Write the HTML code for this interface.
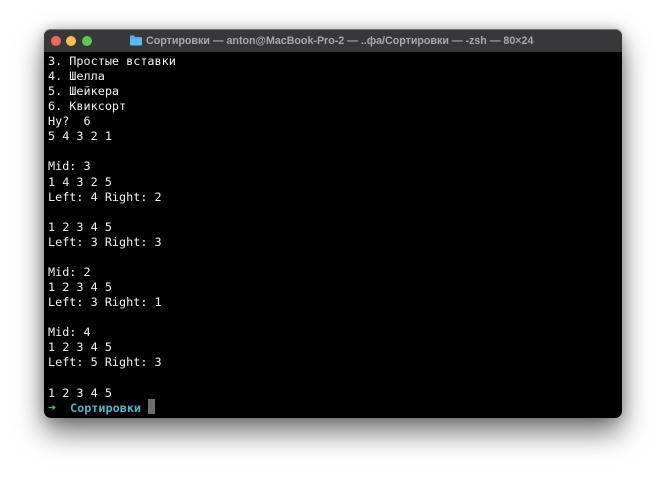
<!DOCTYPE html>
<html>
<head>
<meta charset="utf-8">
<style>
html,body{margin:0;padding:0;background:#fff;width:666px;height:477px;overflow:hidden}
#win{position:absolute;left:44px;top:29px;width:578px;height:389px;border-radius:7px;background:#000;box-shadow:0 14px 28px rgba(0,0,0,.55),0 0 12px rgba(0,0,0,.22)}
#bar{position:absolute;left:0;top:0;width:578px;height:23px;background:#38383b;border-radius:7px 7px 0 0;border-top:1px solid #77777a;box-sizing:border-box}
.dot{position:absolute;top:6px;width:10px;height:10px;border-radius:50%}
#title{position:absolute;left:102px;top:5px;font:bold 10.68px/13px "Liberation Sans",sans-serif;color:#a9a9ab;white-space:nowrap;filter:blur(.3px)}
#folder{position:absolute;left:86px;top:5px}
.l{position:absolute;left:4px;font:11.8px/15px "DejaVu Sans Mono",monospace;color:#f2f2f2;white-space:pre;filter:blur(.3px)}
</style>
</head>
<body>
<div id="win">
<div id="bar">
<div class="dot" style="left:7px;background:#ec6a5e"></div>
<div class="dot" style="left:22px;background:#f4bf4f"></div>
<div class="dot" style="left:38px;background:#61c554"></div>
<svg id="folder" width="12" height="11" viewBox="0 0 12 11"><path d="M0 1.500Q0 .5 1 .5H4L5 2H11Q12 2 12 3V9.500Q12 10.500 11 10.500H1Q0 10.500 0 9.500Z" fill="#5cb8ef"/><rect x="0" y="2.500" width="12" height=".7" fill="#3f9fdc"/></svg>
<div id="title">Сортировки — anton@MacBook-Pro-2 — ..фа/Сортировки — -zsh — 80×24</div>
</div>
<div class="l" style="top:25px">3. Простые вставки</div>
<div class="l" style="top:40px">4. Шелла</div>
<div class="l" style="top:55px">5. Шейкера</div>
<div class="l" style="top:70px">6. Квиксорт</div>
<div class="l" style="top:85px">Ну?  6</div>
<div class="l" style="top:100px">5 4 3 2 1</div>
<div class="l" style="top:130px">Mid: 3</div>
<div class="l" style="top:146px">1 4 3 2 5</div>
<div class="l" style="top:161px">Left: 4 Right: 2</div>
<div class="l" style="top:191px">1 2 3 4 5</div>
<div class="l" style="top:206px">Left: 3 Right: 3</div>
<div class="l" style="top:236px">Mid: 2</div>
<div class="l" style="top:251px">1 2 3 4 5</div>
<div class="l" style="top:266px">Left: 3 Right: 1</div>
<div class="l" style="top:296px">Mid: 4</div>
<div class="l" style="top:311px">1 2 3 4 5</div>
<div class="l" style="top:326px">Left: 5 Right: 3</div>
<div class="l" style="top:357px">1 2 3 4 5</div>
<svg style="position:absolute;left:4px;top:375px" width="8" height="7" viewBox="0 0 8 7"><path d="M0.500 3.500H6.500M4.500 1.500L6.800 3.500L4.500 5.500" stroke="#4fb84f" stroke-width="1.300" fill="none"/></svg>
<div class="l" style="top:372px;left:26px;color:#4fb8c9;font-weight:bold">Сортировки</div>
<div style="position:absolute;left:104px;top:370px;width:7px;height:15px;background:#6e6e6e"></div>
</div>
</body>
</html>
